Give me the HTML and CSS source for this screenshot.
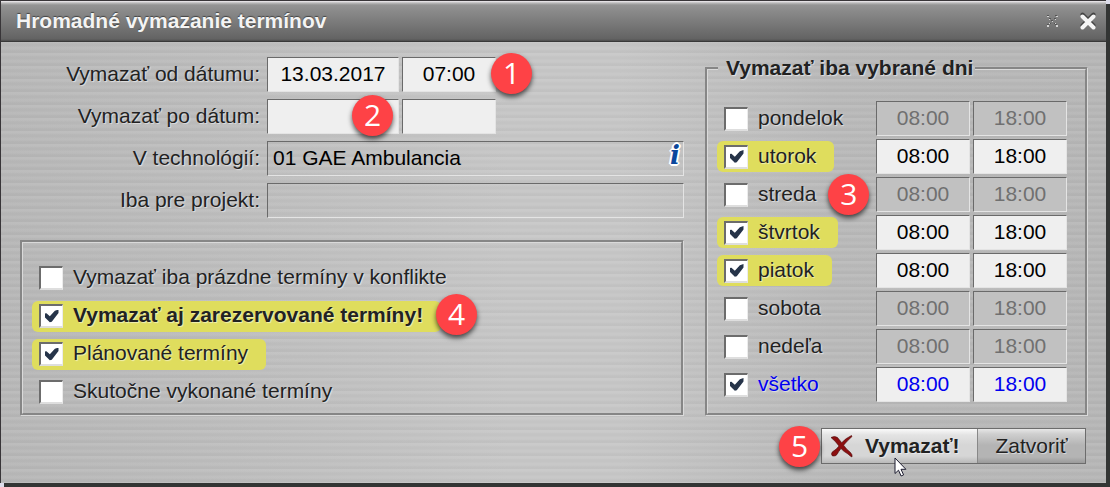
FILE: index.html
```html
<!DOCTYPE html>
<html lang="sk">
<head>
<meta charset="utf-8">
<meta name="viewport" content="width=device-width, initial-scale=1">
<title>Hromadné vymazanie termínov</title>
<link rel="stylesheet" href="styles.css">
</head>
<body>
<main class="dialog">
  <header class="titlebar">
    <h1 class="title">Hromadné vymazanie termínov</h1>
    <button class="tool" type="button" aria-label="Zmeniť veľkosť">
      <svg width="14" height="14" viewBox="0 0 14 14" aria-hidden="true">
        <path fill="#555" d="M2 1h2v1H2zM10 1h2v1h-2zM4 4h2v1H4zM9 4h2v1H9zM6 6h2v1H6zM4 9h2v1H4zM9 9h2v1H9zM2 10h2v1H2zM10 10h2v1h-2z"/>
        <path fill="#d4d4d4" d="M2 2h2v1H2zM11 2h2v1h-2zM4 5h1v1H4zM10 5h1v1h-1zM7 7h1v1H7zM4 9h1v1H4zM10 9h1v1h-1zM2 11h2v2H2zM11 11h2v2h-2z"/>
      </svg>
    </button>
    <button class="tool" type="button" aria-label="Zavrieť">
      <svg width="18" height="18" viewBox="0 0 18 18" aria-hidden="true">
        <path d="M3.500 2.500l11 11M14.500 2.500l-11 11" stroke="#444" stroke-width="4" stroke-linecap="round"/>
        <path d="M3.500 4.500l11 11M14.500 4.500l-11 11" stroke="#f4f4f4" stroke-width="4" stroke-linecap="round"/>
      </svg>
    </button>
  </header>

  <form class="content">
    <div class="left">
      <div class="fields">
        <label class="caption" for="from-date">Vymazať od dátumu:</label>
        <div class="field-row">
          <input class="box date" id="from-date" type="text" value="13.03.2017">
          <div class="anchor">
            <input class="box time" type="text" value="07:00" aria-label="Čas od">
            <span class="badge badge-1">1</span>
          </div>
        </div>
        <label class="caption" for="to-date">Vymazať po dátum:</label>
        <div class="field-row">
          <div class="anchor">
            <input class="box date" id="to-date" type="text">
            <span class="badge badge-2">2</span>
          </div>
          <input class="box time" type="text" aria-label="Čas do">
        </div>
        <label class="caption" for="tech">V technológií:</label>
        <div class="anchor">
          <input class="box wide" id="tech" type="text" value="01 GAE Ambulancia" readonly>
          <button class="info" type="button" aria-label="Informácie">i</button>
        </div>
        <label class="caption" for="project">Iba pre projekt:</label>
        <input class="box wide" id="project" type="text" readonly>
      </div>

      <fieldset class="group options">
        <div class="option"><label class="check"><input type="checkbox"><span>Vymazať iba prázdne termíny v konflikte</span></label></div>
        <div class="option"><label class="check marked strong anchor"><input type="checkbox" checked><span>Vymazať aj zarezervované termíny!</span><span class="badge badge-4">4</span></label></div>
        <div class="option"><label class="check marked"><input type="checkbox" checked><span>Plánované termíny</span></label></div>
        <div class="option"><label class="check"><input type="checkbox"><span>Skutočne vykonané termíny</span></label></div>
      </fieldset>
    </div>

    <fieldset class="group days">
      <legend>Vymazať iba vybrané dni</legend>
      <div class="day">
        <label class="check"><input type="checkbox"><span>pondelok</span></label>
        <input class="box time" type="text" value="08:00" aria-label="pondelok od" disabled>
        <input class="box time" type="text" value="18:00" aria-label="pondelok do" disabled>
      </div>
      <div class="day">
        <label class="check marked"><input type="checkbox" checked><span>utorok</span></label>
        <input class="box time" type="text" value="08:00" aria-label="utorok od">
        <input class="box time" type="text" value="18:00" aria-label="utorok do">
      </div>
      <div class="day">
        <label class="check anchor"><input type="checkbox"><span>streda</span><span class="badge badge-3">3</span></label>
        <input class="box time" type="text" value="08:00" aria-label="streda od" disabled>
        <input class="box time" type="text" value="18:00" aria-label="streda do" disabled>
      </div>
      <div class="day">
        <label class="check marked"><input type="checkbox" checked><span>štvrtok</span></label>
        <input class="box time" type="text" value="08:00" aria-label="štvrtok od">
        <input class="box time" type="text" value="18:00" aria-label="štvrtok do">
      </div>
      <div class="day">
        <label class="check marked"><input type="checkbox" checked><span>piatok</span></label>
        <input class="box time" type="text" value="08:00" aria-label="piatok od">
        <input class="box time" type="text" value="18:00" aria-label="piatok do">
      </div>
      <div class="day">
        <label class="check"><input type="checkbox"><span>sobota</span></label>
        <input class="box time" type="text" value="08:00" aria-label="sobota od" disabled>
        <input class="box time" type="text" value="18:00" aria-label="sobota do" disabled>
      </div>
      <div class="day">
        <label class="check"><input type="checkbox"><span>nedeľa</span></label>
        <input class="box time" type="text" value="08:00" aria-label="nedeľa od" disabled>
        <input class="box time" type="text" value="18:00" aria-label="nedeľa do" disabled>
      </div>
      <div class="day all">
        <label class="check"><input type="checkbox" checked><span>všetko</span></label>
        <input class="box time" type="text" value="08:00" aria-label="všetko od">
        <input class="box time" type="text" value="18:00" aria-label="všetko do">
      </div>
    </fieldset>
  </form>

  <footer class="footer">
    <div class="actions anchor">
      <button class="action primary" type="button">
        <svg width="24" height="24" viewBox="0 0 24 24" aria-hidden="true">
          <path fill="#8c0f10" stroke="#4a0808" stroke-width=".6" d="M1 3.500Q4.500 1.500 7.500 3.500Q9.500 6 11.700 8.700Q16 4 21.500 1.500L22 2.500Q17.500 6.500 13.600 11.200Q16 15 20.500 18.500Q22.500 20.500 22 23Q20.500 22.500 18 20Q13.500 17.500 11 14.500Q8.500 17.500 7 20.500Q5.500 22.500 2.500 22Q.5 20 2.500 17.800Q6.500 15.500 9 12Q5.500 7 1 3.500Z"/>
        </svg>
        <span>Vymazať!</span>
      </button>
      <button class="action" type="button">Zatvoriť</button>
      <span class="badge badge-5">5</span>
      <svg class="cursor" width="13" height="20" viewBox="0 0 13 20" aria-hidden="true">
        <path d="M1 1v15.500l3.500-3.300 2.600 5.800 2.500-1.100-2.600-5.600h4.900z" fill="#fff" stroke="#1c1c30" stroke-width="1"/>
      </svg>
    </div>
  </footer>
</main>
</body>
</html>
```
FILE: styles.css
```css
* {
  box-sizing: border-box;
}

body {
  margin: 0;
  min-height: 100vh;
  display: flex;
  padding: 0 4px 4px 0;
  background: #dcdcea;
  color: #222;
  font: 21px/24px "Liberation Sans", Arial, sans-serif;
}

button,
input {
  font: inherit;
  color: inherit;
  margin: 0;
}

.dialog {
  flex: 1;
  display: flex;
  flex-direction: column;
  border: 1px solid #383538;
  border-width: 1px 0 0 1px;
  box-shadow: 4px 4px 0 #333534;
  background:
    repeating-linear-gradient(180deg, rgba(255, 255, 255, .07) 0 2px, rgba(0, 0, 0, .01) 4px 6px, rgba(255, 255, 255, .04) 7px 9px, rgba(0, 0, 0, .025) 11px 13px),
    linear-gradient(90deg, #b7b7b7 0, #bcbcbc 18%, #c6c6c6 46%, #c6c6c6 56%, #b9b9b9 75%, #b6b6b6 100%);
  text-shadow: 1px 1px 1px rgba(255, 255, 255, .55);
}

.titlebar {
  display: flex;
  align-items: center;
  height: 41px;
  padding: 0 9px 0 15px;
  border-bottom: 1px solid #393939;
  background: linear-gradient(180deg, #f2eef2 0, #b9b9b9 2px, #949494 4px, #8a8a8a 10px, #636363 38px, #4c4c4c 40px);
}

.title {
  flex: 1;
  margin: 0;
  color: #f4f4f4;
  font-size: 21px;
  line-height: 24px;
  font-weight: bold;
  text-shadow: 0 -1px 1px #444;
}

.tool {
  display: flex;
  padding: 0;
  border: 0;
  background: none;
}

.tool + .tool {
  margin-left: 20px;
}

.anchor {
  position: relative;
}

.content {
  display: grid;
  grid-template-columns: minmax(0, 664fr) minmax(0, 383fr);
  gap: 21px;
  padding: 15px 18px 0 19px;
}

.left {
  display: flex;
  flex-direction: column;
  gap: 22px;
}

.fields {
  display: grid;
  grid-template-columns: 240px minmax(0, 1fr);
  gap: 7px;
  align-items: center;
}

.caption {
  padding-bottom: 2px;
  text-align: right;
}

.field-row {
  display: flex;
  gap: 3px;
}

.box {
  display: block;
  height: 35px;
  padding: 0 5px 2px;
  border: 1px solid #6a6a6a;
  border-right-color: #e4e4e4;
  border-bottom-color: #e4e4e4;
  border-radius: 0;
  background: #efefef;
  color: #000;
}

.date {
  width: 132px;
  text-align: center;
}

.time {
  width: 94px;
  text-align: center;
}

.wide {
  width: 100%;
  background: transparent;
}

.box:disabled {
  background: #c1c1c1;
  color: #707070;
}

.info {
  position: absolute;
  top: 1px;
  right: 4px;
  padding: 0;
  border: 0;
  background: none;
  color: #0b489c;
  font: italic bold 26px/26px "DejaVu Serif", serif;
  text-shadow: 2px 0 #fff, -2px 0 #fff, 0 2px #fff, 0 -2px #fff, 1px 1px #fff, -1px -1px #fff, 1px -1px #fff, -1px 1px #fff;
}

.group {
  min-width: 0;
  margin: 0;
  border: 3px groove #dadada;
}

.options {
  padding: 16px 12px 2px 9px;
}

.option {
  display: flex;
  align-items: center;
  height: 38px;
}

.check {
  display: inline-flex;
  align-items: center;
  gap: 10px;
  height: 31px;
  padding: 0 18px 0 7px;
  border-radius: 6px;
  white-space: nowrap;
}

.check > span:not(.badge) {
  padding-bottom: 2px;
}

.marked {
  background: #dfdd5d;
}

.strong {
  font-weight: bold;
}

.check input {
  appearance: none;
  flex: none;
  display: grid;
  place-items: center;
  width: 24px;
  height: 24px;
  border: 2px solid #6c6c6c;
  border-width: 2px 1px 2px 2px;
  border-right-color: #ececec;
  border-bottom-color: #dedede;
  background: #fff;
}

.check input:checked::before {
  content: "";
  width: 14px;
  height: 13px;
  background: #263449;
  clip-path: polygon(0 30%, 14% 28%, 38% 52%, 74% 10%, 100% 0, 100% 26%, 52% 94%, 38% 98%, 0 58%);
}

.days {
  display: flex;
  flex-direction: column;
  gap: 3px;
  padding: 22px 18px 11px 9px;
}

.days legend {
  margin-left: 1px;
  padding: 0 2px 0 8px;
  line-height: 22px;
  font-weight: bold;
}

.day {
  display: flex;
  align-items: center;
  gap: 3px;
}

.day .check {
  margin-right: auto;
}

.all,
.all .box {
  color: #0000f0;
}

.footer {
  display: flex;
  justify-content: flex-end;
  padding: 12px 20px 19px;
}

.actions {
  display: flex;
  border: 1px solid #6c6c6c;
}

.action {
  width: 108px;
  height: 34px;
  padding: 0;
  border: 0;
  border-left: 1px solid #888;
  background: linear-gradient(180deg, #e6e6e6 0, #cfcfcf 5px, #b4b4b4 16px, #b4b4b4 28px, #9a9a9a 34px);
  text-shadow: inherit;
}

.primary {
  display: flex;
  align-items: center;
  gap: 11px;
  width: 155px;
  padding-left: 8px;
  border-left: 0;
  background: linear-gradient(180deg, #fafafa 0, #e3e3e3 6px, #d6d6d6 16px, #d6d6d6 27px, #b9b9b9 34px);
  font-weight: bold;
}

.badge {
  position: absolute;
  z-index: 1;
  width: 41px;
  height: 41px;
  border-radius: 50%;
  background: #fe4246;
  box-shadow: 0 3px 5px rgba(0, 0, 0, .65);
  color: #fff;
  font: 30px/40px "Open Sans", "Noto Sans", sans-serif;
  text-align: center;
  text-shadow: none;
}

.badge-1 {
  top: -4px;
  right: -36px;
}

.badge-2 {
  top: -4px;
  right: 6px;
}

.badge-3 {
  top: -5px;
  right: -35px;
}

.badge-4 {
  top: -7px;
  right: -36px;
}

.badge-5 {
  top: -3px;
  left: -43px;
}

.cursor {
  position: absolute;
  top: 28px;
  left: 72px;
}
```
